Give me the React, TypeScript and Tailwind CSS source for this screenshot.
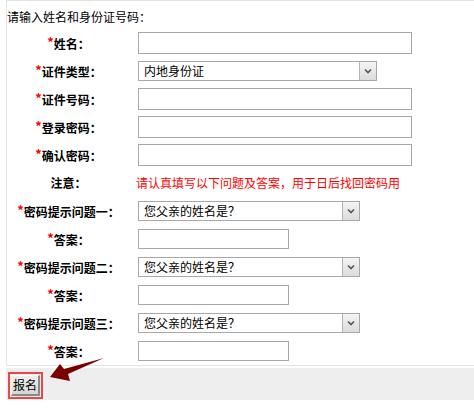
import React from 'react';

const font = { fontFamily: '"Noto Sans CJK SC", "DejaVu Sans", sans-serif' };

const Label = ({ text, star = true }: { text: string; star?: boolean }) => (
  <div className="w-[123px] text-center font-bold text-[12px] text-black leading-none">
    {star && <span className="text-[#ff0000] font-bold text-[13px] relative -top-[2px]">*</span>}
    {text}：
  </div>
);

const TextBox = ({ w, h = 'h-[22px]' }: { w: string; h?: string }) => (
  <div className={`${w} ${h} border border-[#a8a8a8] bg-white`} />
);

const Select = ({ w, value }: { w: string; value: string }) => (
  <div className={`${w} h-[20px] border border-[#a8a8a8] bg-white flex items-stretch`}>
    <div className="flex-1 flex items-center pl-[5px] text-[12px] text-black leading-none">{value}</div>
    <div className="w-[17px] bg-gradient-to-b from-[#f4f4f4] to-[#dcdcdc] border-l border-[#b4b4b4] flex items-center justify-center">
      <svg width="8" height="6" viewBox="0 0 8 6">
        <path d="M1 1.5 L4 4.5 L7 1.5" stroke="#555" strokeWidth="1.6" fill="none" />
      </svg>
    </div>
  </div>
);

const Row = ({ children }: { children: React.ReactNode }) => (
  <div className="h-[28px] flex items-center">{children}</div>
);

export default function App() {
  const question = '您父亲的姓名是？';
  return (
    <div className="relative w-[474px] h-[409px] bg-white overflow-hidden" style={font}>
      <div className="ml-[6px] border-l border-t border-b border-[#e3e3e3]">
        <div className="h-[28px] flex items-center text-[12px] text-black pt-[3px]">请输入姓名和身份证号码：</div>
        <Row>
          <Label text="姓名" />
          <div className="ml-[8px]"><TextBox w="w-[274px]" /></div>
        </Row>
        <Row>
          <Label text="证件类型" />
          <div className="ml-[8px]"><Select w="w-[239px]" value="内地身份证" /></div>
        </Row>
        <Row>
          <Label text="证件号码" />
          <div className="ml-[8px]"><TextBox w="w-[274px]" /></div>
        </Row>
        <Row>
          <Label text="登录密码" />
          <div className="ml-[8px]"><TextBox w="w-[274px]" /></div>
        </Row>
        <Row>
          <Label text="确认密码" />
          <div className="ml-[8px]"><TextBox w="w-[274px]" /></div>
        </Row>
        <Row>
          <Label text="注意" star={false} />
          <div className="ml-[6px] text-[12px] text-[#ff0000] leading-none">请认真填写以下问题及答案，用于日后找回密码用</div>
        </Row>
        {['一', '二', '三'].map(n => (
          <React.Fragment key={n}>
            <Row>
              <Label text={`密码提示问题${n}`} />
              <div className="ml-[8px]"><Select w="w-[222px]" value={question} /></div>
            </Row>
            <Row>
              <Label text="答案" />
              <div className="ml-[8px]"><TextBox w="w-[151px]" h="h-[20px]" /></div>
            </Row>
          </React.Fragment>
        ))}
      </div>

      <div className="ml-[6px] mt-[2px] h-[32px] bg-[#eeeeee] pt-[4px] pl-[2px] flex items-start">
        <div className="border-2 border-[#e84848] p-px flex">
          <button className="w-[29px] h-[21px] p-0 text-[12px] leading-none text-black bg-gradient-to-b from-[#eef0ee] to-[#d4d8d4] border-t border-l border-t-[#f8f8f8] border-l-[#f8f8f8] border-b-2 border-r-2 border-b-[#8a8a8a] border-r-[#8a8a8a]">
            报名
          </button>
        </div>
      </div>

      <svg className="absolute left-0 top-0 pointer-events-none" width="474" height="409">
        <polygon points="50,377 60,364 64,369 104,358 68,374 70,381" fill="#7a0000" />
      </svg>
    </div>
  );
}
